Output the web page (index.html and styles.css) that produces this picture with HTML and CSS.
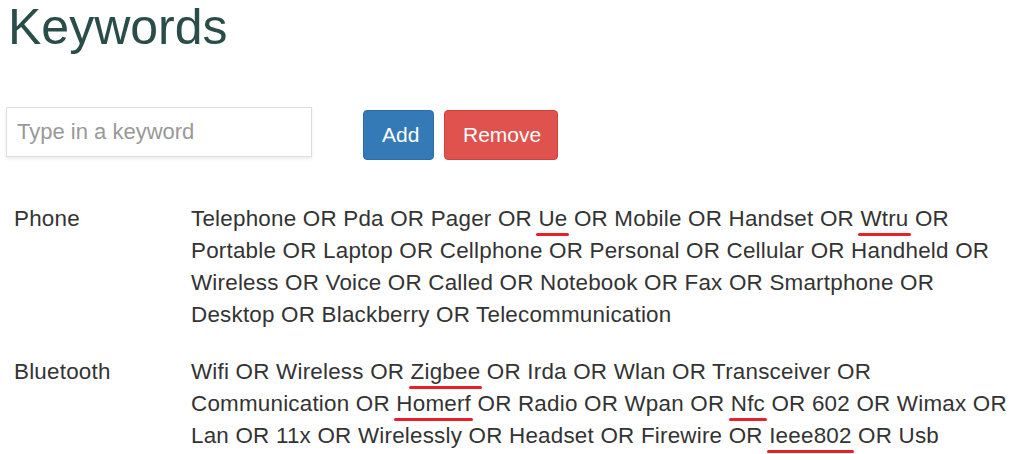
FILE: index.html
```html
<!DOCTYPE html>
<html lang="en">
<head>
    <meta charset="UTF-8">
    <title>Keywords</title>
    <link rel="stylesheet" href="styles.css">
</head>
<body>
    <h1>Keywords</h1>

    <div class="keyword-form">
        <input id="keywordInput" type="text" placeholder="Type in a keyword">
        <button class="btn btn-add">Add</button>
        <button class="btn btn-remove">Remove</button>
    </div>

    <table class="keyword-table">
        <tr>
            <td class="keyword-name">Phone</td>
            <td class="keyword-terms">Telephone OR Pda OR Pager OR <span class="flag">Ue</span> OR Mobile OR Handset OR <span class="flag">Wtru</span> OR Portable OR Laptop OR Cellphone OR Personal OR Cellular OR Handheld OR Wireless OR Voice OR Called OR Notebook OR Fax OR Smartphone OR Desktop OR Blackberry OR Telecommunication</td>
        </tr>
        <tr>
            <td class="keyword-name">Bluetooth</td>
            <td class="keyword-terms">Wifi OR Wireless OR <span class="flag">Zigbee</span> OR Irda OR Wlan OR Transceiver OR Communication OR <span class="flag">Homerf</span> OR Radio OR Wpan OR <span class="flag">Nfc</span> OR 602 OR Wimax OR Lan OR 11x OR Wirelessly OR Headset OR Firewire OR <span class="flag">Ieee802</span> OR Usb</td>
        </tr>
    </table>
</body>
</html>
```

FILE: styles.css
```css
body {
    font-family: "Liberation Sans", Arial, sans-serif;
    color: #333;
    background: #fff;
    margin: 0;
    padding: 0 4px 0 6px;
}

h1 {
    font-size: 50px;
    font-weight: normal;
    line-height: 55px;
    color: #2a4d4a;
    margin: 0 0 52px 2px;
}

.keyword-form {
    display: flex;
    align-items: flex-start;
}

.keyword-form input[type="text"] {
    box-sizing: border-box;
    width: 306px;
    height: 50px;
    padding: 0 10px;
    font-family: inherit;
    font-size: 22px;
    color: #555;
    border: 1px solid #ddd;
    border-radius: 0;
    box-shadow: 0 2px 3px rgba(0,0,0,0.08);
    outline: none;
}

.keyword-form input::placeholder {
    color: #999;
}

.btn {
    box-sizing: border-box;
    height: 50px;
    margin-top: 3px;
    padding: 0 18px;
    font-family: inherit;
    font-size: 21px;
    color: #fff;
    border: 1px solid transparent;
    border-radius: 4px;
    cursor: pointer;
}

.btn-add {
    width: 71px;
    margin-left: 51px;
    background-color: #337ab7;
    border-color: #2e6da4;
}

.btn-remove {
    width: 114px;
    margin-left: 10px;
    background-color: #df524e;
    border-color: #d43f3a;
}

.keyword-table {
    border-collapse: collapse;
    margin-top: 31px;
}

.keyword-table td {
    vertical-align: top;
    font-size: 22.4px;
    letter-spacing: 0.22px;
    line-height: 32px;
    padding: 12px 0 13px 8px;
}

.keyword-name {
    width: 177px;
    box-sizing: border-box;
}

.keyword-terms {
    padding-right: 0;
}

.flag {
    position: relative;
}

.flag::after {
    content: "";
    position: absolute;
    left: -2px;
    right: -2px;
    bottom: -5px;
    height: 3px;
    background: #e8202a;
    border-radius: 2px;
}
```
